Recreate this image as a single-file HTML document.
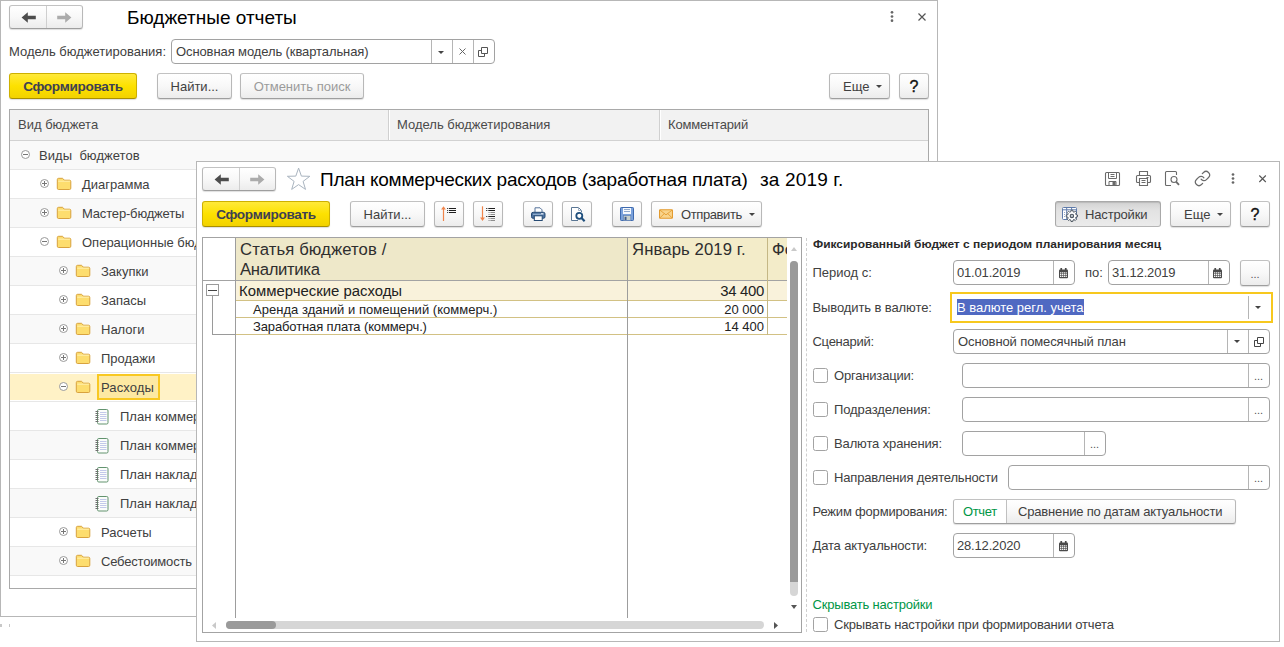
<!DOCTYPE html>
<html lang="ru">
<head>
<meta charset="utf-8">
<title>Бюджетные отчеты</title>
<style>
*{box-sizing:border-box;margin:0;padding:0}
html,body{width:1284px;height:647px;overflow:hidden;background:#fff}
body{font-family:"Liberation Sans",sans-serif;font-size:13px;color:#404040;position:relative}
div,span,svg{position:absolute}
.win{background:#fff;border:1px solid #b7b7b7}
.t{white-space:pre;line-height:16px;height:16px}
.btn{height:26px;border:1px solid #b8b8b8;border-top-color:#c2c2c2;border-bottom-color:#9e9e9e;border-radius:3px;background:linear-gradient(#ffffff,#f8f8f8 50%,#ececec);box-shadow:0 1px 1px rgba(0,0,0,.13);color:#404040}
.btn .t{left:0;right:0;top:5px;text-align:center}
.btn.y{background:linear-gradient(#ffe93a,#fde100 50%,#f2d200);border-color:#cdb000;border-bottom-color:#a98f00;color:#3e4152;font-weight:bold}
.btn.y .t{font-size:13.6px;letter-spacing:-0.32px;top:4px;line-height:17px;height:17px}
.btn.dis{color:#9b9b9b}
.btn.pr{background:linear-gradient(#d2d2d2,#e2e2e2 35%,#ebebeb);border-color:#a9a9a9;border-bottom-color:#b5b5b5;box-shadow:inset 0 1px 1px rgba(0,0,0,.12)}
.inp{height:25px;border:1px solid #a2a2a2;border-radius:4px;background:#fff}
.inp .t{left:4px;top:4px}
.sp{top:0;bottom:0;width:1px;background:#b5b5b5}
.cb{width:15px;height:15px;border:1px solid #a3a3a3;border-radius:2.5px;background:#fff}
.row{left:10px;width:918px;height:29px;border-bottom:1px solid #e7e7e7}
.row.g{background:#f9f9f9}
.row.sel{background:linear-gradient(#fff 0,#fff 1px,#fff2c6 1px,#fff2c6 27px,#fff 27px)}
.tg{width:9px;height:9px;border:1px solid #9a9a9a;border-radius:50%;background:#fff}
.tg i{position:absolute;left:1px;top:3px;width:5px;height:1px;background:#777}
.tg b{position:absolute;left:3px;top:1px;width:1px;height:5px;background:#777}
</style>
</head>
<body>
<!-- Window 1: Бюджетные отчеты -->
<div class="win" style="left:0;top:0;width:938px;height:617px"></div>
<div class="btn" style="left:9px;top:5px;width:74px;height:24px"><div class="sp" style="left:36px;background:#cfcfcf"></div><svg style="left:10px;top:5px" width="17" height="13" viewBox="0 0 17 13"><path d="M1.6 6.5 L7.8 1.2 L7.8 4.8 L15.8 4.8 L15.8 8.2 L7.8 8.2 L7.8 11.8 Z" fill="#4d4d4d"/></svg><svg style="left:46px;top:5px" width="17" height="13" viewBox="0 0 17 13"><path d="M15.4 6.5 L9.2 1.2 L9.2 4.8 L1.2 4.8 L1.2 8.2 L9.2 8.2 L9.2 11.8 Z" fill="#ababab"/></svg></div>
<span class="t" style="left:127px;top:7px;font-size:19px;line-height:22px;height:22px;color:#000">Бюджетные отчеты</span>
<svg style="left:889px;top:10px" width="6" height="13" viewBox="0 0 6 13"><circle cx="3" cy="2.3" r="1.35" fill="#666"/><circle cx="3" cy="6.5" r="1.35" fill="#666"/><circle cx="3" cy="10.7" r="1.35" fill="#666"/></svg>
<svg style="left:917px;top:12px" width="10" height="10" viewBox="0 0 10 10"><path d="M1.5 1.5L8.5 8.5M8.5 1.5L1.5 8.5" stroke="#555" stroke-width="1.2"/></svg>
<span class="t" style="left:9px;top:44px;">Модель бюджетирования:</span>
<div class="inp" style="left:171px;top:39px;width:324px"><span class="t" style="letter-spacing:-0.1px">Основная модель (квартальная)</span><div class="sp" style="left:259px"></div><div class="sp" style="left:280px"></div><div class="sp" style="left:301px"></div><svg style="left:266px;top:11px" width="6" height="3" viewBox="0 0 6 3"><path d="M0 0H6L3 3Z" fill="#444"/></svg><svg style="left:287px;top:8px" width="7" height="7" viewBox="0 0 7 7"><path d="M0.5 0.5L6.5 6.5M6.5 0.5L0.5 6.5" stroke="#666" stroke-width="1"/></svg><svg style="left:306px;top:7px" width="10" height="10" viewBox="0 0 10 10"><path d="M3.5 0.5H9.5V6.5H3.5Z M3.5 3.5H0.5V9.5H6.5V6.5" fill="none" stroke="#555" stroke-width="1"/></svg></div>
<div class="btn y" style="left:9px;top:73px;width:128px"><span class="t">Сформировать</span></div>
<div class="btn" style="left:157px;top:73px;width:75px"><span class="t">Найти...</span></div>
<div class="btn dis" style="left:240px;top:73px;width:124px"><span class="t">Отменить поиск</span></div>
<div class="btn" style="left:829px;top:73px;width:61px"><span class="t" style="left:13px;right:auto;text-align:left">Еще</span><svg style="left:46px;top:11px" width="6" height="3" viewBox="0 0 6 3"><path d="M0 0H6L3 3Z" fill="#444"/></svg></div>
<div class="btn" style="left:899px;top:73px;width:30px"><span class="t" style="font-size:16px;color:#111;top:5px;-webkit-text-stroke:0.35px #111">?</span></div>
<div style="left:9px;top:109px;width:920px;height:480px;border:1px solid #a9a9a9;background:#fff"></div>
<div style="left:10px;top:110px;width:918px;height:31px;background:#f2f2f2;border-bottom:1px solid #d2d2d2"></div>
<div style="left:388px;top:110px;width:1px;height:30px;background:#d0d0d0"></div><div style="left:389px;top:110px;width:1px;height:30px;background:#fff"></div>
<div style="left:659px;top:110px;width:1px;height:30px;background:#d0d0d0"></div><div style="left:660px;top:110px;width:1px;height:30px;background:#fff"></div>
<span class="t" style="left:18px;top:117px;color:#4a4a4a">Вид бюджета</span>
<span class="t" style="left:397px;top:117px;color:#4a4a4a">Модель бюджетирования</span>
<span class="t" style="left:668px;top:117px;letter-spacing:-0.170px;color:#4a4a4a">Комментарий</span>
<div class="row g" style="top:141px"></div>
<div class="tg" style="left:21px;top:150px"><i></i></div>
<span class="t" style="left:39px;top:148px;letter-spacing:0.049px;">Виды  бюджетов</span>
<div class="row" style="top:170px"></div>
<div class="tg" style="left:40px;top:179px"><i></i><b></b></div>
<svg style="left:56px;top:177px" width="16" height="14" viewBox="0 0 16 14"><path d="M1.3 2.6 Q1.3 1.3 2.6 1.3 L6.2 1.3 Q6.9 1.3 7.4 2 L8.2 3.2 L13.5 3.2 Q14.8 3.2 14.8 4.5 L14.8 11.2 Q14.8 12.5 13.5 12.5 L2.6 12.5 Q1.3 12.5 1.3 11.2 Z" fill="#fddd6e" stroke="#d8a23e" stroke-width="1"/><path d="M2.2 4.2H13.9" stroke="#fff0b0" stroke-width="1"/></svg>
<span class="t" style="left:82px;top:177px;">Диаграмма</span>
<div class="row g" style="top:199px"></div>
<div class="tg" style="left:40px;top:208px"><i></i><b></b></div>
<svg style="left:56px;top:206px" width="16" height="14" viewBox="0 0 16 14"><path d="M1.3 2.6 Q1.3 1.3 2.6 1.3 L6.2 1.3 Q6.9 1.3 7.4 2 L8.2 3.2 L13.5 3.2 Q14.8 3.2 14.8 4.5 L14.8 11.2 Q14.8 12.5 13.5 12.5 L2.6 12.5 Q1.3 12.5 1.3 11.2 Z" fill="#fddd6e" stroke="#d8a23e" stroke-width="1"/><path d="M2.2 4.2H13.9" stroke="#fff0b0" stroke-width="1"/></svg>
<span class="t" style="left:82px;top:206px;letter-spacing:-0.170px;">Мастер-бюджеты</span>
<div class="row" style="top:228px"></div>
<div class="tg" style="left:40px;top:237px"><i></i></div>
<svg style="left:56px;top:235px" width="16" height="14" viewBox="0 0 16 14"><path d="M1.3 2.6 Q1.3 1.3 2.6 1.3 L6.2 1.3 Q6.9 1.3 7.4 2 L8.2 3.2 L13.5 3.2 Q14.8 3.2 14.8 4.5 L14.8 11.2 Q14.8 12.5 13.5 12.5 L2.6 12.5 Q1.3 12.5 1.3 11.2 Z" fill="#fddd6e" stroke="#d8a23e" stroke-width="1"/><path d="M2.2 4.2H13.9" stroke="#fff0b0" stroke-width="1"/></svg>
<span class="t" style="left:82px;top:235px;">Операционные бюджеты</span>
<div class="row g" style="top:257px"></div>
<div class="tg" style="left:59px;top:266px"><i></i><b></b></div>
<svg style="left:75px;top:264px" width="16" height="14" viewBox="0 0 16 14"><path d="M1.3 2.6 Q1.3 1.3 2.6 1.3 L6.2 1.3 Q6.9 1.3 7.4 2 L8.2 3.2 L13.5 3.2 Q14.8 3.2 14.8 4.5 L14.8 11.2 Q14.8 12.5 13.5 12.5 L2.6 12.5 Q1.3 12.5 1.3 11.2 Z" fill="#fddd6e" stroke="#d8a23e" stroke-width="1"/><path d="M2.2 4.2H13.9" stroke="#fff0b0" stroke-width="1"/></svg>
<span class="t" style="left:101px;top:264px;">Закупки</span>
<div class="row" style="top:286px"></div>
<div class="tg" style="left:59px;top:295px"><i></i><b></b></div>
<svg style="left:75px;top:293px" width="16" height="14" viewBox="0 0 16 14"><path d="M1.3 2.6 Q1.3 1.3 2.6 1.3 L6.2 1.3 Q6.9 1.3 7.4 2 L8.2 3.2 L13.5 3.2 Q14.8 3.2 14.8 4.5 L14.8 11.2 Q14.8 12.5 13.5 12.5 L2.6 12.5 Q1.3 12.5 1.3 11.2 Z" fill="#fddd6e" stroke="#d8a23e" stroke-width="1"/><path d="M2.2 4.2H13.9" stroke="#fff0b0" stroke-width="1"/></svg>
<span class="t" style="left:101px;top:293px;">Запасы</span>
<div class="row g" style="top:315px"></div>
<div class="tg" style="left:59px;top:324px"><i></i><b></b></div>
<svg style="left:75px;top:322px" width="16" height="14" viewBox="0 0 16 14"><path d="M1.3 2.6 Q1.3 1.3 2.6 1.3 L6.2 1.3 Q6.9 1.3 7.4 2 L8.2 3.2 L13.5 3.2 Q14.8 3.2 14.8 4.5 L14.8 11.2 Q14.8 12.5 13.5 12.5 L2.6 12.5 Q1.3 12.5 1.3 11.2 Z" fill="#fddd6e" stroke="#d8a23e" stroke-width="1"/><path d="M2.2 4.2H13.9" stroke="#fff0b0" stroke-width="1"/></svg>
<span class="t" style="left:101px;top:322px;">Налоги</span>
<div class="row" style="top:344px"></div>
<div class="tg" style="left:59px;top:353px"><i></i><b></b></div>
<svg style="left:75px;top:351px" width="16" height="14" viewBox="0 0 16 14"><path d="M1.3 2.6 Q1.3 1.3 2.6 1.3 L6.2 1.3 Q6.9 1.3 7.4 2 L8.2 3.2 L13.5 3.2 Q14.8 3.2 14.8 4.5 L14.8 11.2 Q14.8 12.5 13.5 12.5 L2.6 12.5 Q1.3 12.5 1.3 11.2 Z" fill="#fddd6e" stroke="#d8a23e" stroke-width="1"/><path d="M2.2 4.2H13.9" stroke="#fff0b0" stroke-width="1"/></svg>
<span class="t" style="left:101px;top:351px;">Продажи</span>
<div class="row sel" style="top:373px"></div>
<div class="tg" style="left:59px;top:382px"><i></i></div>
<svg style="left:75px;top:380px" width="16" height="14" viewBox="0 0 16 14"><path d="M1.3 2.6 Q1.3 1.3 2.6 1.3 L6.2 1.3 Q6.9 1.3 7.4 2 L8.2 3.2 L13.5 3.2 Q14.8 3.2 14.8 4.5 L14.8 11.2 Q14.8 12.5 13.5 12.5 L2.6 12.5 Q1.3 12.5 1.3 11.2 Z" fill="#fddd6e" stroke="#d8a23e" stroke-width="1"/><path d="M2.2 4.2H13.9" stroke="#fff0b0" stroke-width="1"/></svg>
<div style="left:97px;top:374px;width:63px;height:26px;background:#fde9a2;border:2px solid #f8c822"></div>
<span class="t" style="left:101px;top:380px;letter-spacing:0.115px;">Расходы</span>
<div class="row" style="top:402px"></div>
<svg style="left:95px;top:409px" width="14" height="16" viewBox="0 0 14 16"><rect x="2.5" y="0.5" width="10.5" height="14.5" rx="1.3" fill="#fbfdfb" stroke="#62936e"/><path d="M5 3.5H11.5M5 5.5H11.5M5 7.5H11.5M5 9.5H11.5M5 11.5H11.5" stroke="#c3c9ea" stroke-width="1"/><path d="M0.5 2.5H3.5M0.5 4.5H3.5M0.5 6.5H3.5M0.5 8.5H3.5M0.5 10.5H3.5M0.5 12.5H3.5" stroke="#6e6e6e" stroke-width="1"/></svg>
<span class="t" style="left:120px;top:409px;">План коммерческих расходов</span>
<div class="row g" style="top:431px"></div>
<svg style="left:95px;top:438px" width="14" height="16" viewBox="0 0 14 16"><rect x="2.5" y="0.5" width="10.5" height="14.5" rx="1.3" fill="#fbfdfb" stroke="#62936e"/><path d="M5 3.5H11.5M5 5.5H11.5M5 7.5H11.5M5 9.5H11.5M5 11.5H11.5" stroke="#c3c9ea" stroke-width="1"/><path d="M0.5 2.5H3.5M0.5 4.5H3.5M0.5 6.5H3.5M0.5 8.5H3.5M0.5 10.5H3.5M0.5 12.5H3.5" stroke="#6e6e6e" stroke-width="1"/></svg>
<span class="t" style="left:120px;top:438px;">План коммерческих расходов (заработная плата)</span>
<div class="row" style="top:460px"></div>
<svg style="left:95px;top:467px" width="14" height="16" viewBox="0 0 14 16"><rect x="2.5" y="0.5" width="10.5" height="14.5" rx="1.3" fill="#fbfdfb" stroke="#62936e"/><path d="M5 3.5H11.5M5 5.5H11.5M5 7.5H11.5M5 9.5H11.5M5 11.5H11.5" stroke="#c3c9ea" stroke-width="1"/><path d="M0.5 2.5H3.5M0.5 4.5H3.5M0.5 6.5H3.5M0.5 8.5H3.5M0.5 10.5H3.5M0.5 12.5H3.5" stroke="#6e6e6e" stroke-width="1"/></svg>
<span class="t" style="left:120px;top:467px;">План накладных расходов</span>
<div class="row g" style="top:489px"></div>
<svg style="left:95px;top:496px" width="14" height="16" viewBox="0 0 14 16"><rect x="2.5" y="0.5" width="10.5" height="14.5" rx="1.3" fill="#fbfdfb" stroke="#62936e"/><path d="M5 3.5H11.5M5 5.5H11.5M5 7.5H11.5M5 9.5H11.5M5 11.5H11.5" stroke="#c3c9ea" stroke-width="1"/><path d="M0.5 2.5H3.5M0.5 4.5H3.5M0.5 6.5H3.5M0.5 8.5H3.5M0.5 10.5H3.5M0.5 12.5H3.5" stroke="#6e6e6e" stroke-width="1"/></svg>
<span class="t" style="left:120px;top:496px;">План накладных расходов (заработная плата)</span>
<div class="row" style="top:518px"></div>
<div class="tg" style="left:59px;top:527px"><i></i><b></b></div>
<svg style="left:75px;top:525px" width="16" height="14" viewBox="0 0 16 14"><path d="M1.3 2.6 Q1.3 1.3 2.6 1.3 L6.2 1.3 Q6.9 1.3 7.4 2 L8.2 3.2 L13.5 3.2 Q14.8 3.2 14.8 4.5 L14.8 11.2 Q14.8 12.5 13.5 12.5 L2.6 12.5 Q1.3 12.5 1.3 11.2 Z" fill="#fddd6e" stroke="#d8a23e" stroke-width="1"/><path d="M2.2 4.2H13.9" stroke="#fff0b0" stroke-width="1"/></svg>
<span class="t" style="left:101px;top:525px;">Расчеты</span>
<div class="row g" style="top:547px"></div>
<div class="tg" style="left:59px;top:556px"><i></i><b></b></div>
<svg style="left:75px;top:554px" width="16" height="14" viewBox="0 0 16 14"><path d="M1.3 2.6 Q1.3 1.3 2.6 1.3 L6.2 1.3 Q6.9 1.3 7.4 2 L8.2 3.2 L13.5 3.2 Q14.8 3.2 14.8 4.5 L14.8 11.2 Q14.8 12.5 13.5 12.5 L2.6 12.5 Q1.3 12.5 1.3 11.2 Z" fill="#fddd6e" stroke="#d8a23e" stroke-width="1"/><path d="M2.2 4.2H13.9" stroke="#fff0b0" stroke-width="1"/></svg>
<span class="t" style="left:101px;top:554px;letter-spacing:-0.184px;">Себестоимость</span>
<div style="left:0;top:624px;width:2px;height:3px;background:#c8c8c8"></div><div style="left:9px;top:624px;width:1px;height:3px;background:#c8c8c8"></div>
<!-- Window 2: План коммерческих расходов -->
<div class="win" style="left:196px;top:161px;width:1084px;height:481px"></div>
<div class="btn" style="left:202px;top:167px;width:74px;height:24px"><div class="sp" style="left:36px;background:#cfcfcf"></div><svg style="left:10px;top:5px" width="17" height="13" viewBox="0 0 17 13"><path d="M1.6 6.5 L7.8 1.2 L7.8 4.8 L15.8 4.8 L15.8 8.2 L7.8 8.2 L7.8 11.8 Z" fill="#4d4d4d"/></svg><svg style="left:46px;top:5px" width="17" height="13" viewBox="0 0 17 13"><path d="M15.4 6.5 L9.2 1.2 L9.2 4.8 L1.2 4.8 L1.2 8.2 L9.2 8.2 L9.2 11.8 Z" fill="#ababab"/></svg></div>
<svg style="left:286px;top:167px" width="26" height="25" viewBox="0 0 26 25"><path d="M12.6 1.1 L15.4 9.1 L23.8 9.3 L17.1 14.4 L19.5 22.4 L12.6 17.6 L5.7 22.4 L8.1 14.4 L1.4 9.3 L9.8 9.1 Z" fill="#fff" stroke="#a9b4bf" stroke-width="1" stroke-linejoin="miter"/></svg>
<span class="t" style="left:320px;top:169px;letter-spacing:-0.228px;font-size:19px;line-height:22px;height:22px;color:#000">План коммерческих расходов (заработная плата)</span>
<span class="t" style="left:760px;top:169px;letter-spacing:0.152px;font-size:19px;line-height:22px;height:22px;color:#000">за 2019 г.</span>
<svg style="left:1104px;top:171px" width="17" height="16" viewBox="0 0 17 16"><path d="M1.5 2.5Q1.5 1.5 2.5 1.5H14.5Q15.5 1.5 15.5 2.5V13.5Q15.5 14.5 14.5 14.5H2.5Q1.5 14.5 1.5 13.5Z" fill="none" stroke="#6a6a6a" stroke-width="1.1"/><path d="M4.5 1.5V7.5H12.5V1.5M6.5 3.5H10.5M6.5 5.5H10.5" fill="none" stroke="#6a6a6a" stroke-width="1"/><path d="M5 14.5V10.5H12V14.5" fill="none" stroke="#6a6a6a" stroke-width="1"/><rect x="8.5" y="11" width="3" height="3.5" fill="#6a6a6a"/></svg>
<svg style="left:1135px;top:170px" width="17" height="17" viewBox="0 0 17 17"><path d="M4.5 5.5V1.5H12.5V5.5" fill="none" stroke="#6a6a6a" stroke-width="1.1"/><path d="M4.5 12.5H2.5Q1.5 12.5 1.5 11.5V6.5Q1.5 5.5 2.5 5.5H14.5Q15.5 5.5 15.5 6.5V11.5Q15.5 12.5 14.5 12.5H12.5" fill="none" stroke="#6a6a6a" stroke-width="1.1"/><path d="M4.5 8.5H12.5V15.5H4.5Z" fill="#fff" stroke="#6a6a6a" stroke-width="1.1"/><path d="M6.5 10.5H10.5M6.5 12.5H10.5M11.5 7.5H13.5" stroke="#6a6a6a" stroke-width="1"/></svg>
<svg style="left:1164px;top:170px" width="17" height="17" viewBox="0 0 17 17"><path d="M12.5 5V2.5Q12.5 1.5 11.5 1.5H2.5Q1.5 1.5 1.5 2.5V14.5Q1.5 15.5 2.5 15.5H7" fill="none" stroke="#6a6a6a" stroke-width="1.1"/><circle cx="10" cy="9.5" r="3" fill="none" stroke="#6a6a6a" stroke-width="1.1"/><path d="M12.2 11.8L15 14.8" stroke="#6a6a6a" stroke-width="1.8"/></svg>
<svg style="left:1194px;top:170px" width="17" height="17" viewBox="0 0 24 24"><g fill="none" stroke="#6a6a6a" stroke-width="1.7" stroke-linecap="round" stroke-linejoin="round"><path d="M10 13a5 5 0 0 0 7.54.54l3-3a5 5 0 0 0-7.07-7.07l-1.72 1.71"/><path d="M14 11a5 5 0 0 0-7.54-.54l-3 3a5 5 0 0 0 7.07 7.07l1.71-1.71"/></g></svg>
<svg style="left:1230px;top:172px" width="6" height="13" viewBox="0 0 6 13"><circle cx="3" cy="2.5" r="1.35" fill="#666"/><circle cx="3" cy="6.5" r="1.35" fill="#666"/><circle cx="3" cy="10.5" r="1.35" fill="#666"/></svg>
<svg style="left:1258px;top:174px" width="10" height="10" viewBox="0 0 10 10"><path d="M1.3 1.5L7.8 8M7.8 1.5L1.3 8" stroke="#555" stroke-width="1.1"/></svg>
<div class="btn y" style="left:202px;top:201px;width:128px"><span class="t">Сформировать</span></div>
<div class="btn" style="left:350px;top:201px;width:75px"><span class="t">Найти...</span></div>
<div class="btn" style="left:434px;top:201px;width:30px"><svg style="left:4px;top:4px" width="20" height="16" viewBox="0 0 20 16"><path d="M4.5 15V2" stroke="#f0844a" stroke-width="1.2"/><path d="M2.1 3.4L4.5 0.2L6.9 3.4Z" fill="#f0844a"/><path d="M10 2.5H17M10 4.5H17M10 6.5H17" stroke="#1e1e1e" stroke-width="1"/><path d="M8.2 2.5H9.2M8.2 4.5H9.2M8.2 6.5H9.2" stroke="#1e1e1e" stroke-width="1"/></svg></div>
<div class="btn" style="left:473px;top:201px;width:30px"><svg style="left:4px;top:4px" width="20" height="16" viewBox="0 0 20 16"><path d="M4.5 0.3V13" stroke="#f0844a" stroke-width="1.2"/><path d="M2.1 11.6L4.5 14.9L6.9 11.6Z" fill="#f0844a"/><path d="M10.3 2.5H17M10.3 4.5H17M10.3 10.5H17" stroke="#1e1e1e" stroke-width="1"/><path d="M8.2 2.5H9.3M8.2 4.5H9.3M8.2 10.5H9.3" stroke="#1e1e1e" stroke-width="1"/><path d="M12.4 6.5H17M12.4 8.5H17M12.4 12.5H17M12.4 14.5H17" stroke="#8d8d8d" stroke-width="1"/><path d="M10.6 6.5H11.5M10.6 8.5H11.5M10.6 12.5H11.5M10.6 14.5H11.5" stroke="#777" stroke-width="1"/></svg></div>
<div class="btn" style="left:523px;top:201px;width:30px"><svg style="left:7px;top:4px" width="15" height="16" viewBox="0 0 15 16"><path d="M4 6.5V1.8H9L11 3.8V6.5" fill="#fff" stroke="#56739a" stroke-width="1"/><rect x="0.5" y="6.3" width="13.5" height="6" rx="1.6" fill="#4d73a1" stroke="#264a73" stroke-width="1"/><path d="M2 8.3H12.5" stroke="#9fb8d6" stroke-width="1"/><rect x="10" y="7.2" width="2.4" height="0.9" fill="#e6edf5"/><rect x="3.3" y="9.8" width="7.9" height="4.7" fill="#fff" stroke="#264a73" stroke-width="1"/></svg></div>
<div class="btn" style="left:562px;top:201px;width:30px"><svg style="left:7px;top:4px" width="17" height="17" viewBox="0 0 17 17"><path d="M8 14.5H1.5V1.5H8.5L11.5 4.5V6" fill="#fff" stroke="#5a7694" stroke-width="1"/><path d="M8.5 1.5V4.5H11.5" fill="none" stroke="#9fb0c4" stroke-width="1"/><circle cx="9.3" cy="9.8" r="3" fill="#fff" stroke="#1f4f7d" stroke-width="1.8"/><path d="M11.6 12.1L14.6 15.2" stroke="#1f4f7d" stroke-width="2.2"/></svg></div>
<div class="btn" style="left:612px;top:201px;width:30px"><svg style="left:7px;top:5px" width="14" height="14" viewBox="0 0 14 14"><rect x="0.5" y="0.5" width="13" height="13" rx="0.8" fill="#7aa1db" stroke="#3d69ae"/><rect x="3" y="1" width="8" height="6" fill="#f6f9fd"/><path d="M4 2.5H10M4 4.5H10" stroke="#8fa9cd" stroke-width="1"/><rect x="3.4" y="8.6" width="7.4" height="4.9" fill="#c7cfcb" stroke="#5a7eb4" stroke-width="0.6"/><rect x="4.6" y="9.8" width="1.9" height="3.2" fill="#3d5d8f"/></svg></div>
<div class="btn" style="left:651px;top:201px;width:111px"><svg style="left:7px;top:7px" width="14" height="10" viewBox="0 0 16 11"><rect x="0.6" y="0.6" width="14.8" height="9.8" rx="1" fill="#f9d48c" stroke="#e39b2f" stroke-width="1.2"/><path d="M1 1L8 6.5L15 1M1 10L6 5M15 10L10 5" fill="none" stroke="#e39b2f" stroke-width="1"/></svg><span class="t" style="left:29px;right:auto;text-align:left;letter-spacing:-0.4px">Отправить</span><svg style="left:97px;top:11px" width="6" height="3" viewBox="0 0 6 3"><path d="M0 0H6L3 3Z" fill="#444"/></svg></div>
<div class="btn pr" style="left:1055px;top:201px;width:106px"><svg style="left:5px;top:4px" width="18" height="17" viewBox="0 0 18 17"><rect x="1.5" y="1.5" width="14" height="12" rx="1" fill="#fff" stroke="#5f7baa" stroke-width="1"/><path d="M1.5 3.8H15.5M5.7 1.5V13.5M10.6 1.5V3.8" stroke="#5f7baa" stroke-width="1" fill="none"/><path d="M3.6 6V11.5" stroke="#8aa0c4" stroke-width="1" stroke-dasharray="1 1"/><path d="M15.05 8.79L16.53 9.01L16.53 10.79L15.05 11.01L14.62 12.05L15.51 13.25L14.25 14.51L13.05 13.62L12.01 14.05L11.79 15.53L10.01 15.53L9.79 14.05L8.75 13.62L7.55 14.51L6.29 13.25L7.18 12.05L6.75 11.01L5.27 10.79L5.27 9.01L6.75 8.79L7.18 7.75L6.29 6.55L7.55 5.29L8.75 6.18L9.79 5.75L10.01 4.27L11.79 4.27L12.01 5.75L13.05 6.18L14.25 5.29L15.51 6.55L14.62 7.75Z" fill="#fff" stroke="#4c5660" stroke-width="1" stroke-linejoin="round"/><circle cx="10.9" cy="9.9" r="1.7" fill="#c2c8ce" stroke="#4c5660" stroke-width="1.1"/></svg><span class="t" style="left:29px;right:auto;text-align:left;letter-spacing:-0.16px">Настройки</span></div>
<div class="btn" style="left:1170px;top:201px;width:61px"><span class="t" style="left:13px;right:auto;text-align:left">Еще</span><svg style="left:46px;top:11px" width="6" height="3" viewBox="0 0 6 3"><path d="M0 0H6L3 3Z" fill="#444"/></svg></div>
<div class="btn" style="left:1240px;top:201px;width:30px"><span class="t" style="font-size:16px;color:#111;top:5px;-webkit-text-stroke:0.35px #111">?</span></div>
<div style="left:202px;top:237px;width:600px;height:396px;border:1px solid #a3a3a3;background:#fff"></div>
<div style="left:236px;top:238px;width:392px;height:42px;background:#eee8c9"></div>
<div style="left:628px;top:238px;width:159px;height:42px;background:#f3ecc9"></div>
<div style="left:236px;top:281px;width:551px;height:19px;background:#f9f2db"></div>
<div style="left:203px;top:280px;width:584px;height:1px;background:#a3a3a3"></div>
<div style="left:236px;top:300px;width:551px;height:1px;background:#d2c184"></div>
<div style="left:236px;top:317px;width:551px;height:1px;background:#d2c184"></div>
<div style="left:236px;top:334px;width:551px;height:1px;background:#d2c184"></div>
<div style="left:235px;top:238px;width:1px;height:380px;background:#9d9d9d"></div>
<div style="left:627px;top:238px;width:1px;height:380px;background:#9d9d9d"></div>
<div style="left:767px;top:238px;width:1px;height:97px;background:#c4b785"></div>
<div style="left:206px;top:284px;width:13px;height:12px;border:1px solid #9a9a9a;background:#fff"></div><div style="left:208px;top:290px;width:9px;height:1px;background:#444"></div>
<div style="left:212px;top:296px;width:1px;height:39px;background:#9a9a9a"></div><div style="left:212px;top:334px;width:24px;height:1px;background:#9a9a9a"></div>
<span class="t" style="left:240px;top:240px;letter-spacing:0.104px;font-size:16.7px;line-height:19.5px;height:20px;color:#2e2e2e">Статья бюджетов /</span>
<span class="t" style="left:240px;top:259.5px;letter-spacing:-0.329px;font-size:16.7px;line-height:19.5px;height:20px;color:#2e2e2e">Аналитика</span>
<span class="t" style="left:632px;top:240px;letter-spacing:0.103px;font-size:16.7px;line-height:19.5px;height:20px;color:#2e2e2e">Январь 2019 г.</span>
<div style="left:769px;top:238px;width:18px;height:42px;overflow:hidden"><span class="t" style="left:3px;top:2px;font-size:16.7px;line-height:19.5px;height:20px;color:#2e2e2e">Фо</span></div>
<span class="t" style="left:239px;top:283px;font-size:14.9px;line-height:17px;height:17px;color:#222">Коммерческие расходы</span>
<span class="t" style="left:253px;top:302px;letter-spacing:0.034px;line-height:15px;height:15px;color:#222">Аренда зданий и помещений (коммерч.)</span>
<span class="t" style="left:253px;top:319px;letter-spacing:-0.130px;line-height:15px;height:15px;color:#222">Заработная плата (коммерч.)</span>
<span class="t" style="left:664px;top:283px;font-size:14.9px;line-height:17px;height:17px;color:#222;width:100px;text-align:right;letter-spacing:-0.28px">34 400</span>
<span class="t" style="left:664px;top:302px;line-height:15px;height:15px;color:#222;width:100px;text-align:right">20 000</span>
<span class="t" style="left:664px;top:319px;line-height:15px;height:15px;color:#222;width:100px;text-align:right">14 400</span>
<svg style="left:791px;top:247px" width="6" height="4" viewBox="0 0 6 4"><path d="M0 4H6L3 0Z" fill="#c9c9c9"/></svg>
<div style="left:790px;top:261px;width:8px;height:335px;border-radius:4px;background:#d6d6d6"></div>
<div style="left:790px;top:261px;width:8px;height:321px;border-radius:4px 4px 0 0;background:#9a9a9a"></div>
<svg style="left:791px;top:605px" width="6" height="4" viewBox="0 0 6 4"><path d="M0 0H6L3 4Z" fill="#555"/></svg>
<svg style="left:212px;top:622px" width="4" height="7" viewBox="0 0 4 7"><path d="M4 0V7L0 3.5Z" fill="#c9c9c9"/></svg>
<div style="left:226px;top:621px;width:538px;height:8px;border-radius:4px;background:#d6d6d6"></div>
<div style="left:226px;top:621px;width:50px;height:8px;border-radius:4px;background:#9a9a9a"></div>
<svg style="left:774px;top:622px" width="4" height="7" viewBox="0 0 4 7"><path d="M0 0V7L4 3.5Z" fill="#555"/></svg>
<div style="left:806px;top:238px;width:0;height:394px;border-left:1px dashed #cfcfcf"></div>
<span class="t" style="left:812.5px;top:236px;font-weight:bold;font-size:11px;color:#2a2a2a;transform:scaleX(1.086);transform-origin:0 0">Фиксированный бюджет с периодом планирования месяц</span>
<span class="t" style="left:812.5px;top:265px;letter-spacing:-0.002px;">Период с:</span>
<div class="inp" style="left:953px;top:260px;width:122px"><span class="t" style="left:3px;letter-spacing:-0.17px">01.01.2019</span><div class="sp" style="left:99px"></div><svg style="left:105px;top:7px" width="9" height="11" viewBox="0 0 9 11"><rect x="0" y="1.6" width="9" height="8.7" rx="1" fill="#4a4a4a"/><rect x="1.4" y="0" width="1.7" height="2.5" fill="#4a4a4a"/><rect x="5.9" y="0" width="1.7" height="2.5" fill="#4a4a4a"/><rect x="1.00" y="4.30" width="1.3" height="1.15" fill="#fff"/><rect x="2.85" y="4.30" width="1.3" height="1.15" fill="#fff"/><rect x="4.70" y="4.30" width="1.3" height="1.15" fill="#fff"/><rect x="6.55" y="4.30" width="1.3" height="1.15" fill="#fff"/><rect x="1.00" y="6.05" width="1.3" height="1.15" fill="#fff"/><rect x="2.85" y="6.05" width="1.3" height="1.15" fill="#fff"/><rect x="4.70" y="6.05" width="1.3" height="1.15" fill="#fff"/><rect x="6.55" y="6.05" width="1.3" height="1.15" fill="#fff"/><rect x="1.00" y="7.80" width="1.3" height="1.15" fill="#fff"/><rect x="2.85" y="7.80" width="1.3" height="1.15" fill="#fff"/><rect x="4.70" y="7.80" width="1.3" height="1.15" fill="#fff"/><rect x="6.55" y="7.80" width="1.3" height="1.15" fill="#fff"/></svg></div>
<span class="t" style="left:1085px;top:265px;">по:</span>
<div class="inp" style="left:1108px;top:260px;width:122px"><span class="t" style="left:3px;letter-spacing:-0.17px">31.12.2019</span><div class="sp" style="left:99px"></div><svg style="left:104px;top:7px" width="9" height="11" viewBox="0 0 9 11"><rect x="0" y="1.6" width="9" height="8.7" rx="1" fill="#4a4a4a"/><rect x="1.4" y="0" width="1.7" height="2.5" fill="#4a4a4a"/><rect x="5.9" y="0" width="1.7" height="2.5" fill="#4a4a4a"/><rect x="1.00" y="4.30" width="1.3" height="1.15" fill="#fff"/><rect x="2.85" y="4.30" width="1.3" height="1.15" fill="#fff"/><rect x="4.70" y="4.30" width="1.3" height="1.15" fill="#fff"/><rect x="6.55" y="4.30" width="1.3" height="1.15" fill="#fff"/><rect x="1.00" y="6.05" width="1.3" height="1.15" fill="#fff"/><rect x="2.85" y="6.05" width="1.3" height="1.15" fill="#fff"/><rect x="4.70" y="6.05" width="1.3" height="1.15" fill="#fff"/><rect x="6.55" y="6.05" width="1.3" height="1.15" fill="#fff"/><rect x="1.00" y="7.80" width="1.3" height="1.15" fill="#fff"/><rect x="2.85" y="7.80" width="1.3" height="1.15" fill="#fff"/><rect x="4.70" y="7.80" width="1.3" height="1.15" fill="#fff"/><rect x="6.55" y="7.80" width="1.3" height="1.15" fill="#fff"/></svg></div>
<div class="btn" style="left:1240px;top:260px;width:30px"><span class="t" style="font-size:11px;color:#555">...</span></div>
<span class="t" style="left:812.5px;top:300px;letter-spacing:-0.100px;">Выводить в валюте:</span>
<div style="left:950px;top:292px;width:323px;height:31px;border:2px solid #f7c81e;background:#fff"></div>
<div style="left:957px;top:299px;width:127px;height:16px;background:#5069c2"></div>
<span class="t" style="left:957px;top:300px;letter-spacing:-0.015px;color:#fff">В валюте регл. учета</span>
<div style="left:1248px;top:296px;width:1px;height:23px;background:#b5b5b5"></div>
<svg style="left:1255px;top:306px" width="6" height="3" viewBox="0 0 6 3"><path d="M0 0H6L3 3Z" fill="#444"/></svg>
<span class="t" style="left:812.5px;top:334px;letter-spacing:-0.266px;">Сценарий:</span>
<div class="inp" style="left:953px;top:329px;width:317px"><span class="t" style="letter-spacing:-0.11px">Основной помесячный план</span><div class="sp" style="left:273px"></div><div class="sp" style="left:294px"></div><svg style="left:280px;top:10px" width="6" height="3" viewBox="0 0 6 3"><path d="M0 0H6L3 3Z" fill="#444"/></svg><svg style="left:300px;top:7px" width="10" height="10" viewBox="0 0 10 10"><path d="M3.5 0.5H9.5V6.5H3.5Z M3.5 3.5H0.5V9.5H6.5V6.5" fill="none" stroke="#444" stroke-width="1"/></svg></div>
<div class="cb" style="left:813px;top:368px"></div>
<span class="t" style="left:834px;top:368px;letter-spacing:-0.186px;">Организации:</span>
<div class="inp" style="left:962px;top:363px;width:308px"><div class="sp" style="left:285px"></div><span class="t" style="left:291px;top:5px;font-size:11px;color:#555;top:4px">...</span></div>
<div class="cb" style="left:813px;top:402px"></div>
<span class="t" style="left:834px;top:402px;letter-spacing:-0.096px;">Подразделения:</span>
<div class="inp" style="left:962px;top:397px;width:308px"><div class="sp" style="left:285px"></div><span class="t" style="left:291px;top:5px;font-size:11px;color:#555;top:4px">...</span></div>
<div class="cb" style="left:813px;top:436px"></div>
<span class="t" style="left:834px;top:436px;letter-spacing:-0.128px;">Валюта хранения:</span>
<div class="inp" style="left:962px;top:431px;width:144px"><div class="sp" style="left:121px"></div><span class="t" style="left:127px;top:5px;font-size:11px;color:#555;top:4px">...</span></div>
<div class="cb" style="left:813px;top:470px"></div>
<span class="t" style="left:834px;top:470px;letter-spacing:-0.157px;">Направления деятельности</span>
<div class="inp" style="left:1008px;top:465px;width:262px"><div class="sp" style="left:239px"></div><span class="t" style="left:245px;top:5px;font-size:11px;color:#555;top:4px">...</span></div>
<span class="t" style="left:812.5px;top:504px;letter-spacing:-0.189px;">Режим формирования:</span>
<div class="btn" style="left:953px;top:499px;width:283px;height:25px"></div>
<div style="left:954px;top:500px;width:53px;height:23px;background:#fff;border-radius:3px 0 0 3px;border-right:1px solid #c0c0c0"></div>
<span class="t" style="left:963px;top:504px;letter-spacing:-0.358px;color:#009646">Отчет</span>
<span class="t" style="left:1018px;top:504px;letter-spacing:-0.173px;color:#404040">Сравнение по датам актуальности</span>
<span class="t" style="left:812.5px;top:538px;letter-spacing:-0.152px;">Дата актуальности:</span>
<div class="inp" style="left:953px;top:533px;width:122px"><span class="t" style="left:3px;letter-spacing:-0.17px">28.12.2020</span><div class="sp" style="left:99px"></div><svg style="left:105px;top:7px" width="9" height="11" viewBox="0 0 9 11"><rect x="0" y="1.6" width="9" height="8.7" rx="1" fill="#4a4a4a"/><rect x="1.4" y="0" width="1.7" height="2.5" fill="#4a4a4a"/><rect x="5.9" y="0" width="1.7" height="2.5" fill="#4a4a4a"/><rect x="1.00" y="4.30" width="1.3" height="1.15" fill="#fff"/><rect x="2.85" y="4.30" width="1.3" height="1.15" fill="#fff"/><rect x="4.70" y="4.30" width="1.3" height="1.15" fill="#fff"/><rect x="6.55" y="4.30" width="1.3" height="1.15" fill="#fff"/><rect x="1.00" y="6.05" width="1.3" height="1.15" fill="#fff"/><rect x="2.85" y="6.05" width="1.3" height="1.15" fill="#fff"/><rect x="4.70" y="6.05" width="1.3" height="1.15" fill="#fff"/><rect x="6.55" y="6.05" width="1.3" height="1.15" fill="#fff"/><rect x="1.00" y="7.80" width="1.3" height="1.15" fill="#fff"/><rect x="2.85" y="7.80" width="1.3" height="1.15" fill="#fff"/><rect x="4.70" y="7.80" width="1.3" height="1.15" fill="#fff"/><rect x="6.55" y="7.80" width="1.3" height="1.15" fill="#fff"/></svg></div>
<span class="t" style="left:812.5px;top:597px;letter-spacing:-0.184px;color:#009646">Скрывать настройки</span>
<div class="cb" style="left:813px;top:617px"></div>
<span class="t" style="left:834px;top:617px;letter-spacing:-0.164px;">Скрывать настройки при формировании отчета</span>
</body>
</html>
